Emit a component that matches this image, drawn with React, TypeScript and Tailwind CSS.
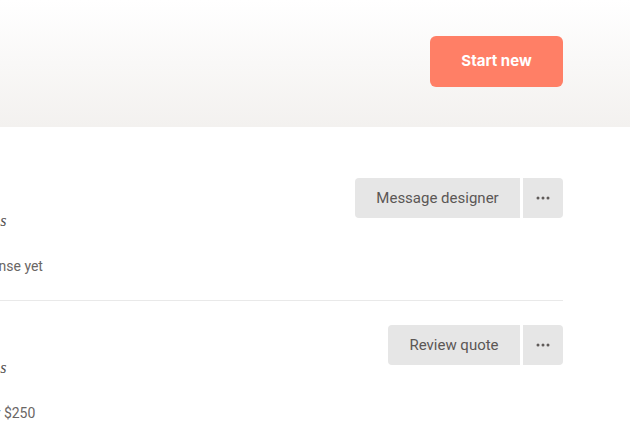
import React from 'react';

const rows = [
    { note: "Kate Sims", status: "No response yet", action: "Message designer", width: "w-[165px]" },
    { note: "Kate Sims", status: "Quote for $250", action: "Review quote", width: "w-[132px]" },
];

function Dots() {
    return (
        <svg width="14" height="4" viewBox="0 0 14 4" className="text-[#5f5b59]">
            <circle cx="2" cy="2" r="1.5" fill="currentColor" />
            <circle cx="7" cy="2" r="1.5" fill="currentColor" />
            <circle cx="12" cy="2" r="1.5" fill="currentColor" />
        </svg>
    );
}

export default function App() {
    return (
        <div className="w-[630px] h-[441px] overflow-hidden bg-white font-['Roboto',sans-serif]">
            {/* header strip */}
            <div className="h-[127px] bg-gradient-to-b from-white to-[#f3f1ef] flex justify-end pt-[36px] pr-[67px]">
                <button className="w-[133px] h-[51px] rounded-[6px] bg-[#ff7f66] text-white text-[15px] font-bold font-['Inter',sans-serif]">
                    Start new
                </button>
            </div>

            {/* projects */}
            <div className="pt-[51px] pr-[67px]">
                {rows.map((row, i) => (
                    <div
                        key={i}
                        className={"flex justify-between items-start pb-[24px] " + (i === 0 ? "border-b border-[#e9e9e9] mb-[24px]" : "")}
                    >
                        <div className="-ml-[58px] pt-[31px] whitespace-nowrap">
                            <p className="text-[16px] leading-[24px] italic text-[#55524f] font-['Liberation_Serif',serif]">{row.note}</p>
                            <p className="mt-[23px] text-[14px] leading-[20px] text-[#6a6664]">{row.status}</p>
                        </div>
                        <div className="flex gap-[3px]">
                            <button className={row.width + " h-[40px] rounded-l-[4px] bg-[#e6e6e6] text-[15px] text-[#5b5755]"}>
                                {row.action}
                            </button>
                            <button className="w-[40px] h-[40px] rounded-r-[4px] bg-[#e6e6e6] flex items-center justify-center">
                                <Dots />
                            </button>
                        </div>
                    </div>
                ))}
            </div>
        </div>
    );
}
